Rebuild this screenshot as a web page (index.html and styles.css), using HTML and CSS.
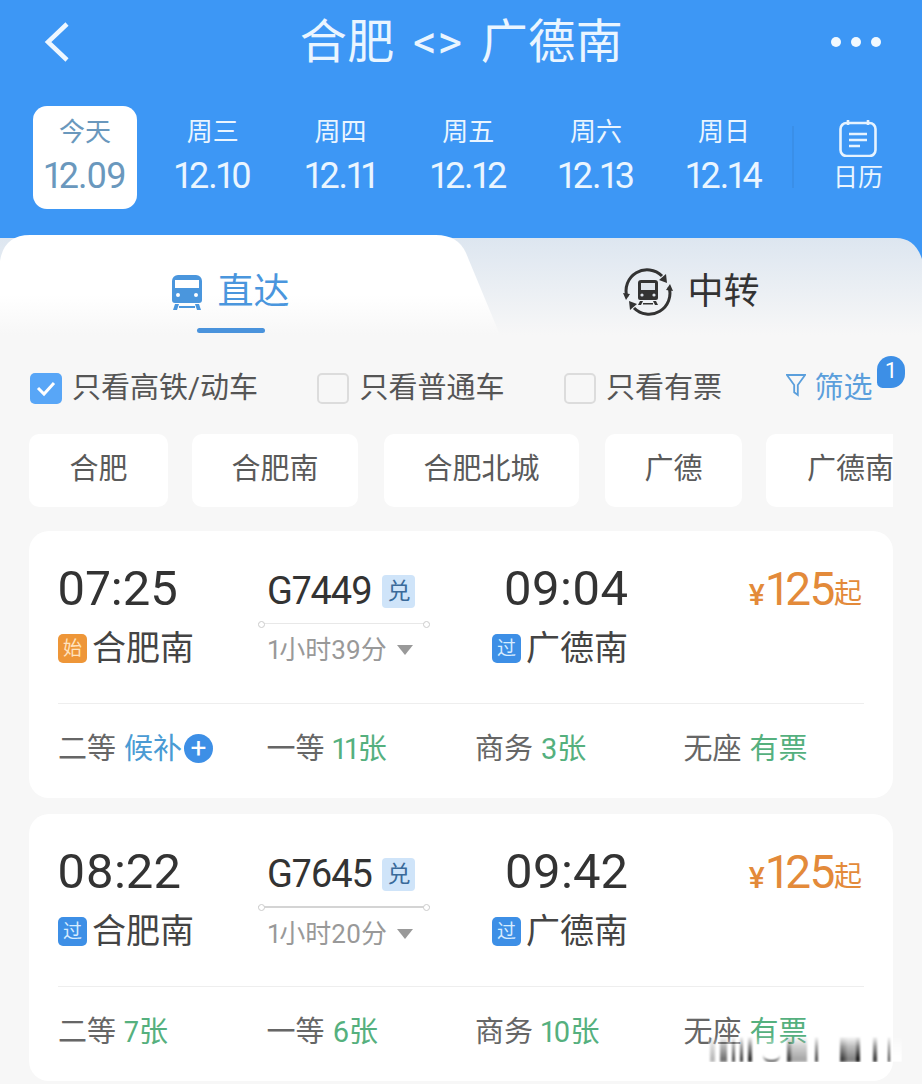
FILE: index.html
```html
<!DOCTYPE html>
<html lang="zh-CN">
<head>
  <meta charset="UTF-8" />
  <meta name="viewport" content="width=device-width, initial-scale=1" />
  <title>合肥 - 广德南</title>
  <link rel="stylesheet" href="styles.css">
</head>
<body>
  <div class="page">
    <header class="header">
      <div class="title-bar">
        <svg class="back" width="30" height="42" viewBox="0 0 30 42"><path d="M25 3 L6 21 L25 39" fill="none" stroke="#eef7ff" stroke-width="4.5" /></svg>
        <h1>合肥 &lt;&gt; 广德南</h1>
        <div class="more"><i></i><i></i><i></i></div>
      </div>
      <div class="dates">
        <div class="date active"><span>今天</span><b>12.09</b></div>
        <div class="date"><span>周三</span><b>12.10</b></div>
        <div class="date"><span>周四</span><b>12.11</b></div>
        <div class="date"><span>周五</span><b>12.12</b></div>
        <div class="date"><span>周六</span><b>12.13</b></div>
        <div class="date"><span>周日</span><b>12.14</b></div>
        <div class="calendar">
          <svg width="38" height="38" viewBox="0 0 38 38" fill="none" stroke="#e6f3ff" stroke-width="2.6">
            <rect x="1.5" y="4" width="35" height="33" rx="6" />
            <path d="M9 1v5M29 1v5M10 15h18M10 21h18M10 27h11" />
          </svg>
          <span>日历</span>
        </div>
      </div>
    </header>

    <div class="tabs">
      <svg class="tab-shape" width="922" height="100" viewBox="0 0 922 100" preserveAspectRatio="none">
        <defs>
          <linearGradient id="backTab" x1="0" y1="0" x2="0" y2="1"><stop offset="0" stop-color="#dde6f0" /><stop offset="1" stop-color="#f7f7f7" /></linearGradient>
          <linearGradient id="frontTab" x1="0" y1="0" x2="0" y2="1"><stop offset="0.6" stop-color="#ffffff" /><stop offset="1" stop-color="#f7f7f7" /></linearGradient>
        </defs>
        <path d="M0 100V3H896Q915 3 922 24V100Z" fill="url(#backTab)" />
        <path d="M0 26Q4 0 30 0H436Q458 0 466 18L500 100H0Z" fill="url(#frontTab)" />
      </svg>
      <div class="tab active">
        <svg width="32" height="36" viewBox="0 0 32 36" fill="#4a96dd">
          <path d="M7 1h18a6 6 0 0 1 6 6v19a3 3 0 0 1-3 3H4a3 3 0 0 1-3-3V7a6 6 0 0 1 6-6zM4 6v8h24V6zM7 19a2 2 0 1 0 0 4 2 2 0 0 0 0-4zM25 19a2 2 0 1 0 0 4 2 2 0 0 0 0-4z" fill-rule="evenodd" />
          <path d="M4 30h4l-2 6H2zM24 30h4l2 6h-4zM8 32h16v2H8z" />
        </svg>
        <span>直达</span>
      </div>
      <div class="tab">
        <svg width="50" height="48" viewBox="0 0 50 48" fill="none">
          <path d="M4 29A21 21 0 0 1 39 8M46 19A21 21 0 0 1 11 40" stroke="#333" stroke-width="3" />
          <path d="M36 12l7-6 1 9zM14 36l-7 6-1-9zM0 25l7 1-4 6zM50 23l-7-1 4-6z" fill="#333" />
          <path d="M18 12h14a3 3 0 0 1 3 3v15a2 2 0 0 1-2 2H17a2 2 0 0 1-2-2V15a3 3 0 0 1 3-3z" fill="#333" />
          <path d="M18 15h14v7H18z" fill="#dfe5ec" />
          <circle cx="19" cy="27" r="1.600" fill="#dfe5ec" />
          <circle cx="31" cy="27" r="1.600" fill="#dfe5ec" />
          <path d="M17 33h3l-2 4h-3zM30 33h3l2 4h-3zM20 35h10v1.500H20z" fill="#333" />
        </svg>
        <span>中转</span>
      </div>
    </div>

    <div class="filters">
      <label class="check on"><i><svg width="22" height="18" viewBox="0 0 22 18"><path d="M3 9l6 6L19 4" fill="none" stroke="#fff" stroke-width="3" /></svg></i>只看高铁/动车</label>
      <label class="check"><i></i>只看普通车</label>
      <label class="check"><i></i>只看有票</label>
      <div class="filter-btn">
        <svg width="20" height="26" viewBox="0 0 22 26" fill="none" stroke="#5b9fdc" stroke-width="2"><path d="M1 2h20L13 13v11l-4-3v-8z" /></svg>
        <span>筛选</span>
        <em>1</em>
      </div>
    </div>

    <div class="stations">
      <div class="station w1">合肥</div>
      <div class="station w2">合肥南</div>
      <div class="station w3">合肥北城</div>
      <div class="station w5">广德</div>
      <div class="station w4">广德南</div>
    </div>

    <div class="card">
      <div class="trip">
        <div class="stop">
          <div class="time">07:25</div>
          <div class="place"><i class="tag start">始</i>合肥南</div>
        </div>
        <div class="train">
          <div class="code">G7449<i>兑</i></div>
          <div class="line faint"></div>
          <div class="during">1小时39分<u></u></div>
        </div>
        <div class="stop right">
          <div class="time">09:04</div>
          <div class="place"><i class="tag">过</i>广德南</div>
        </div>
        <div class="price"><small>¥</small>125<small>起</small></div>
      </div>
      <div class="seats">
        <div class="seat">二等 <span class="wait">候补</span><i class="plus">+</i></div>
        <div class="seat">一等 <span>11张</span></div>
        <div class="seat">商务 <span>3张</span></div>
        <div class="seat">无座 <span>有票</span></div>
      </div>
    </div>

    <div class="card">
      <div class="trip">
        <div class="stop">
          <div class="time">08:22</div>
          <div class="place"><i class="tag">过</i>合肥南</div>
        </div>
        <div class="train">
          <div class="code">G7645<i>兑</i></div>
          <div class="line"></div>
          <div class="during">1小时20分<u></u></div>
        </div>
        <div class="stop right">
          <div class="time">09:42</div>
          <div class="place"><i class="tag">过</i>广德南</div>
        </div>
        <div class="price"><small>¥</small>125<small>起</small></div>
      </div>
      <div class="seats">
        <div class="seat">二等 <span>7张</span></div>
        <div class="seat">一等 <span>6张</span></div>
        <div class="seat">商务 <span>10张</span></div>
        <div class="seat">无座 <span>有票</span></div>
      </div>
    </div>

    <!-- blurred watermark -->
    <div class="watermark"></div>
  </div>
</body>
</html>
```

FILE: styles.css
```css
* {
  box-sizing: border-box;
}

body {
  margin: 0;
  background: #f7f7f7;
  font-family: Roboto, "Noto Sans CJK SC", sans-serif;
  font-variant-numeric: proportional-nums;
  color: #333;
}

.page {
  position: relative;
  width: 922px;
  height: 1084px;
  overflow: hidden;
}

.header {
  height: 235px;
  background: #3d97f5;
  color: #eaf5ff;
}

.title-bar {
  height: 106px;
  padding: 0 41px 22px 42px;
  display: grid;
  grid-template-columns: 1fr auto 1fr;
  align-items: center;
}

.title-bar h1 {
  margin: 0;
  font-size: 47px;
  font-weight: 400;
  line-height: 60px;
  word-spacing: 6px;
  letter-spacing: 0.5px;
}

.more {
  display: flex;
  gap: 10px;
  justify-content: flex-end;
}

.more i {
  width: 10px;
  height: 10px;
  border-radius: 50%;
  background: #f2f9ff;
}

.dates {
  display: grid;
  grid-template-columns: repeat(6, 127.8px) 1fr;
  padding-left: 21px;
}

.date {
  height: 103px;
  padding-top: 5px;
  display: flex;
  flex-direction: column;
  align-items: center;
  justify-content: center;
  border-radius: 14px;
}

.date span {
  font-size: 26px;
  line-height: 34px;
  margin-top: -5px;
}

.date b {
  font-size: 36px;
  font-weight: 400;
  line-height: 50px;
  letter-spacing: -1.1px;
  margin-top: 2px;
}

.date.active {
  width: 104px;
  margin-left: 12px;
  background: #fff;
  color: #6a98bd;
}

.calendar {
  position: relative;
  height: 103px;
  padding: 0 0 3px 6px;
  display: flex;
  flex-direction: column;
  align-items: center;
  justify-content: center;
  gap: 6px;
}

.calendar::before {
  content: "";
  position: absolute;
  left: 4px;
  top: 20px;
  width: 2px;
  height: 62px;
  background: #3a8fe8;
}

.calendar svg {
  flex: none;
}

.calendar span {
  font-size: 25px;
  line-height: 30px;
}

.tabs {
  position: relative;
  height: 100px;
  display: grid;
  grid-template-columns: 461px 461px;
  background: #3d97f5;
}

.tab-shape {
  position: absolute;
  top: 0;
  left: 0;
}

.tab {
  position: relative;
  display: flex;
  align-items: center;
  justify-content: center;
  gap: 14px;
  height: 100px;
  padding-top: 14px;
  font-size: 36px;
}

.tab span {
  line-height: 44px;
}

.tab.active {
  color: #4a96dd;
}

.tab.active::after {
  content: "";
  position: absolute;
  left: 197px;
  bottom: 2px;
  width: 68px;
  height: 5px;
  border-radius: 3px;
  background: #4a93dc;
}

.filters {
  height: 99px;
  padding: 0 0 0 30px;
  display: flex;
  align-items: center;
  font-size: 29px;
  color: #555;
}

.check {
  display: flex;
  align-items: center;
  gap: 10px;
  margin-right: 59.5px;
  white-space: nowrap;
}

.check i {
  width: 32px;
  height: 31px;
  margin-top: 7px;
  border: 2px solid #dcdcdc;
  border-radius: 5px;
  display: flex;
  align-items: center;
  justify-content: center;
}

.check.on i {
  border: 0;
  background: #58a6f7;
}

.filter-btn {
  position: relative;
  display: flex;
  align-items: center;
  gap: 9px;
  margin-left: 4px;
  font-size: 29px;
  color: #5b9fdc;
}

.filter-btn em {
  position: absolute;
  left: 91px;
  top: -8px;
  width: 28px;
  height: 32px;
  border-radius: 15px 15px 15px 6px;
  background: #3d8fe6;
  color: #fff;
  font-size: 22px;
  font-style: normal;
  line-height: 30px;
  text-align: center;
}

.stations {
  margin: 0 29px;
  height: 73px;
  display: flex;
  gap: 24px;
  overflow: hidden;
}

.station {
  flex: none;
  height: 73px;
  border-radius: 10px;
  background: #fff;
  color: #5a5a5a;
  font-size: 29px;
  line-height: 70px;
  text-align: center;
}

.w1 { width: 139px; }
.w2 { width: 166px; }
.w3 { width: 195px; margin: 0 2px; }
.w5 { width: 137px; }
.w4 { width: 160px; padding-left: 41px; text-align: left; }

.card {
  margin: 24px 29px 0;
  height: 267px;
  padding: 0 29px;
  border-radius: 20px;
  background: #fff;
}

.card + .card {
  margin-top: 16px;
}

.trip {
  height: 173px;
  border-bottom: 1px solid #eeeeee;
  display: grid;
  grid-template-columns: 200px 172px 198px 1fr;
  padding-top: 28px;
}

.time {
  font-size: 49px;
  line-height: 60px;
  color: #333;
  margin-left: -1px;
}

.place {
  margin-top: 6px;
  font-size: 34px;
  line-height: 46px;
  display: flex;
  align-items: center;
  gap: 5px;
  color: #444;
}

.stop.right {
  text-align: right;
}

.stop.right .place {
  justify-content: flex-end;
}

.tag {
  width: 29px;
  height: 29px;
  border-radius: 5px;
  background: #3d8fe6;
  color: #d8ecff;
  font-size: 19px;
  font-style: normal;
  line-height: 29px;
  text-align: center;
}

.tag.start {
  background: #ee9638;
  color: #ffe3c0;
}

.train {
  padding: 7px 0 0;
}

.code {
  padding-left: 9px;
  display: flex;
  align-items: center;
  gap: 10px;
  font-size: 38px;
  letter-spacing: -1px;
  line-height: 50px;
}

.code i {
  width: 33px;
  height: 33px;
  border-radius: 4px;
  background: #cfe4f9;
  color: #3a6a9a;
  font-size: 23px;
  font-style: normal;
  line-height: 33px;
  text-align: center;
}

.line {
  position: relative;
  margin-top: 7px;
  height: 2px;
  background: #d4d4d4;
}

.line.faint {
  height: 1px;
  background: #e8e8e8;
}

.line::before,
.line::after {
  content: "";
  position: absolute;
  top: -2px;
  width: 5px;
  height: 5px;
  border: 1px solid #ccc;
  border-radius: 50%;
  background: #fff;
}

.line::before { left: 0; }
.line::after { right: 0; }

.during {
  padding-left: 10px;
  margin-top: 7px;
  display: flex;
  align-items: center;
  gap: 10px;
  font-size: 26px;
  line-height: 38px;
  color: #999;
}

.during u {
  border-left: 8px solid transparent;
  border-right: 8px solid transparent;
  border-top: 10px solid #999;
}

.price {
  padding-right: 2px;
  margin-top: -1px;
  text-align: right;
  font-size: 46px;
  letter-spacing: -1.5px;
  line-height: 62px;
  color: #e38a3a;
}

.price small {
  font-size: 28px;
  letter-spacing: 0;
  vertical-align: 2px;
}

.price small:first-child {
  font-size: 30px;
  font-weight: 500;
  margin-right: 2px;
  vertical-align: 0;
}

.seats {
  height: 93px;
  padding-bottom: 9px;
  display: grid;
  grid-template-columns: 208.5px 208.5px 208.5px 1fr;
  align-items: center;
  font-size: 29px;
  color: #666;
}

.seat {
  display: flex;
  align-items: center;
  gap: 8px;
  white-space: nowrap;
}

.seat span {
  color: #55b07e;
}

.seat span.wait {
  color: #4a9bd4;
}

.plus {
  width: 29px;
  height: 29px;
  margin: 4px 0 0 -6px;
  border-radius: 50%;
  background: #3d8fe6;
  color: #fff;
  font-size: 28px;
  font-style: normal;
  line-height: 27px;
  text-align: center;
}

.watermark {
  position: absolute;
  left: 708px;
  top: 1036px;
  width: 194px;
  height: 26px;
  filter: blur(0.9px);
  background:
    linear-gradient(90deg, transparent 0 2px, #bbb 2px 7px, transparent 7px 12px, #777 12px 19px, transparent 19px 24px, #555 24px 27px, transparent 27px 32px, #444 32px 35px, transparent 35px 40px, #333 40px 44px, transparent 44px 79px, #444 79px 82px, #aaa 84px 99px, transparent 99px 107px, #555 107px 110px, transparent 110px 132px, #444 132px 135px, #888 140px 148px, #222 148px 152px, transparent 152px 165px, #444 165px 169px, transparent 169px 180px, #444 180px 182px, transparent 182px),
    linear-gradient(#fff, #fff);
  mask-image: linear-gradient(to bottom, transparent, rgba(0, 0, 0, 0.55) 40%, #000 85%);
}

/* the smile under the watermark */
.watermark::after {
  content: "";
  position: absolute;
  left: 55px;
  bottom: 0;
  width: 17px;
  height: 5px;
  border-bottom: 2px solid #444;
  border-radius: 0 0 9px 9px;
}
```
